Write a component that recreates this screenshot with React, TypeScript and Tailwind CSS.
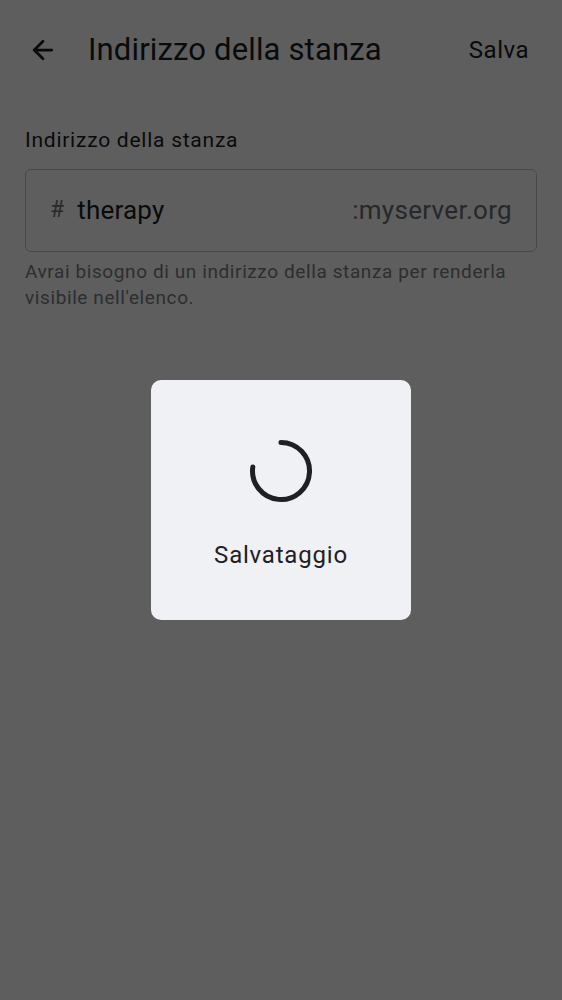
import { ArrowLeft } from 'lucide-react';

const font = { fontFamily: 'Roboto, "Noto Sans", sans-serif' };

export default function App() {
  return (
    <div className="relative h-[1000px] w-[562px] overflow-hidden bg-white" style={font}>
      <header className="flex h-[100px] items-center pl-[28px] pr-[33px]">
        <ArrowLeft className="h-[30px] w-[30px] text-[#1a1c1e]" strokeWidth={2.2} />
        <h1 className="ml-[30px] flex-1 text-[31px] tracking-[0.15px] text-[#1a1c1e]">Indirizzo della stanza</h1>
        <button className="text-[24px] tracking-[0.5px] text-[#1a1c1e]">Salva</button>
      </header>

      <main className="px-[25px] pt-[25px]">
        <label className="block text-[21px] leading-[30px] tracking-[0.75px] text-[#1a1c1e]">
          Indirizzo della stanza
        </label>
        <div className="mt-[14px] flex h-[83px] items-center rounded-[6px] border border-[#c2c4c8] px-[24px]">
          <span className="text-[23px] text-[#6d7075]">#</span>
          <span className="ml-[13px] flex-1 text-[26px] tracking-[0.2px] text-[#1a1c1e]">therapy</span>
          <span className="text-[26px] tracking-[0.3px] text-[#6a6e74]">:myserver.org</span>
        </div>
        <p className="mt-[7px] text-[19px] leading-[26px] tracking-[0.6px] text-[#7a7d82]">
          Avrai bisogno di un indirizzo della stanza per renderla visibile nell'elenco.
        </p>
      </main>

      <div className="absolute inset-0 bg-black/[0.63]" />

      <div className="absolute left-[151px] top-[380px] flex h-[240px] w-[260px] flex-col items-center rounded-[10px] bg-[#f0f1f5]">
        <svg className="mt-[58px]" width="66" height="66" viewBox="0 0 66 66">
          <path
            d="M 33 4.5 A 28.5 28.5 0 1 1 4.8 29"
            fill="none"
            stroke="#1e2024"
            strokeWidth="5"
            strokeLinecap="round"
          />
        </svg>
        <span className="mt-[33px] text-[24px] tracking-[0.8px] text-[#1e2024]">Salvataggio</span>
      </div>
    </div>
  );
}
